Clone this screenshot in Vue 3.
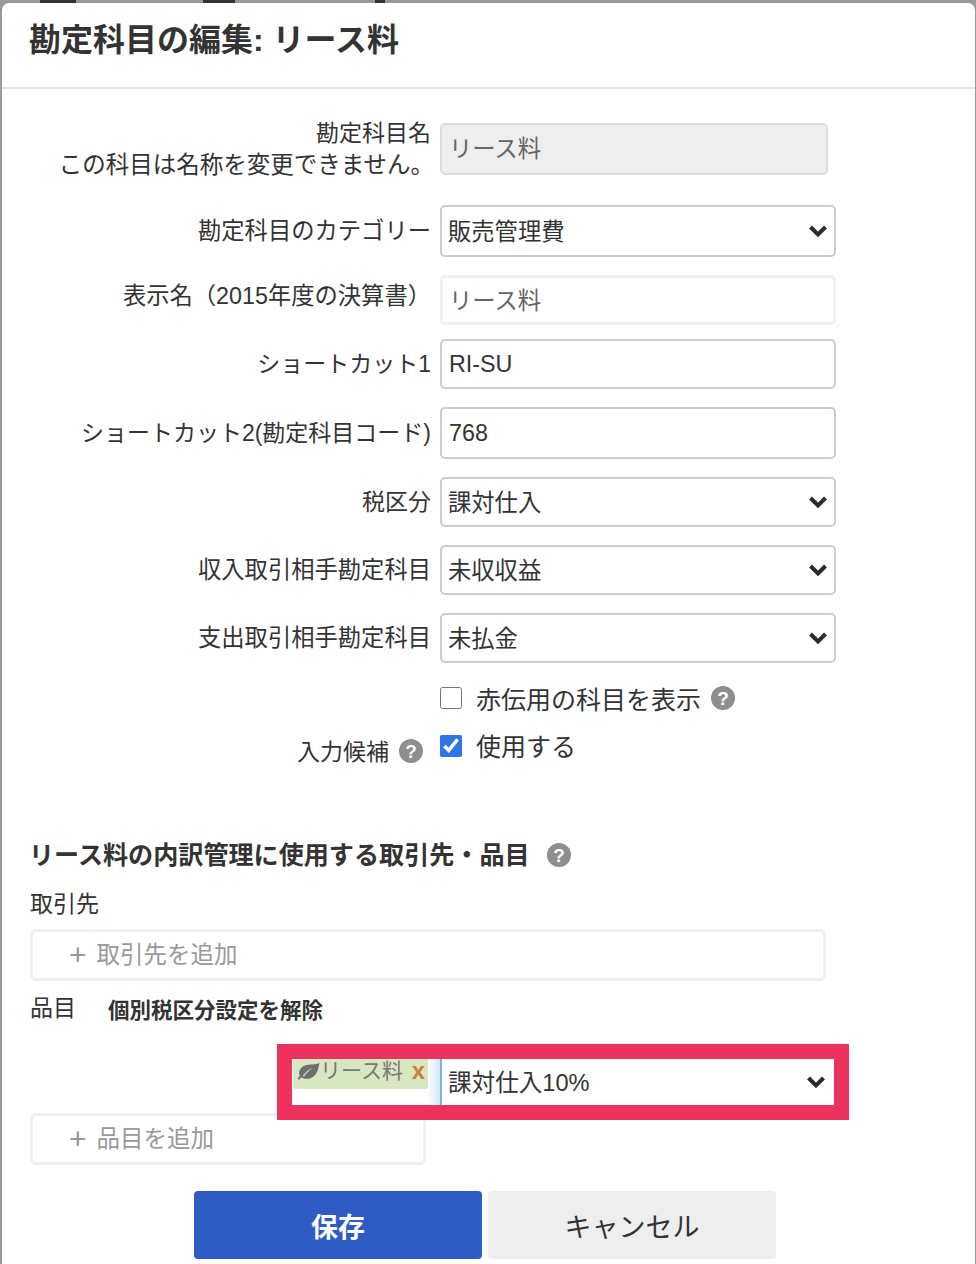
<template>
  <div class="backdrop">
    <i v-for="m in behind" :key="m.left" class="behind" :style="{ left: m.left + 'px', width: m.width + 'px' }" />
    <div class="modal">
      <header class="modal-header">
        <h1>勘定科目の編集: リース料</h1>
      </header>

      <div class="modal-body">
        <div class="form-row row-name">
          <label class="label">勘定科目名<br /><span class="note">この科目は名称を変更できません。</span></label>
          <input class="control control--disabled" value="リース料" disabled />
        </div>

        <div v-for="row in rows" :key="row.label" class="form-row" :class="row.cls">
          <label class="label" :class="{ 'label--wide': row.wide }">{{ row.label }}</label>
          <div v-if="row.options" class="select-wrap">
            <select class="control control--select">
              <option>{{ row.value }}</option>
            </select>
            <svg class="chevron" viewBox="0 0 20 14"><path d="M2.5 3 10 10.5 17.5 3" /></svg>
          </div>
          <input v-else class="control" :class="{ 'control--soft': row.soft }" :value="row.value" />
        </div>

        <div class="check-row check-row--first">
          <input type="checkbox" class="check" />
          <span class="check-text">赤伝用の科目を表示</span>
          <svg class="help" viewBox="0 0 24 24"><circle cx="12" cy="12" r="12" /><text x="12" y="18.5" text-anchor="middle">?</text></svg>
        </div>

        <div class="check-row check-row--second">
          <div class="check-label">
            <span>入力候補</span>
            <svg class="help" viewBox="0 0 24 24"><circle cx="12" cy="12" r="12" /><text x="12" y="18.5" text-anchor="middle">?</text></svg>
          </div>
          <input type="checkbox" class="check" checked />
          <span class="check-text check-text--up">使用する</span>
        </div>

        <h2 class="section-title">
          リース料の内訳管理に使用する取引先・品目
          <svg class="help" viewBox="0 0 24 24"><circle cx="12" cy="12" r="12" /><text x="12" y="18.5" text-anchor="middle">?</text></svg>
        </h2>

        <p class="field-name">取引先</p>
        <div class="add-box add-box--wide"><span class="plus">+</span>取引先を追加</div>

        <div class="item-head">
          <span>品目</span>
          <strong>個別税区分設定を解除</strong>
        </div>

        <div class="tax-row">
          <div class="tag-cell">
            <span class="tag">
              <svg class="leaf" viewBox="0 0 24 18"><path d="M23.5 0C18 3 10 0 5 4.5 1.500 8 1.500 11 2.800 13.500L.5 16.500 2 18l2.500-3c3.500 2.500 9 2.500 13-1C22 10.500 22.500 5 23.500 0ZM6 13.500C9 9.500 12 7 17 5 12.500 8 9.500 10.500 7.200 14.500Z" fill-rule="evenodd" /></svg>リース料<b class="tag-x">x</b>
            </span>
          </div>
          <div class="select-wrap select-wrap--tax">
            <select class="control control--select control--tax">
              <option>課対仕入10%</option>
            </select>
            <svg class="chevron" viewBox="0 0 20 14"><path d="M2.5 3 10 10.5 17.5 3" /></svg>
          </div>
        </div>

        <div class="add-box add-box--narrow"><span class="plus">+</span>品目を追加</div>

        <div class="actions">
          <button class="btn btn--primary">保存</button>
          <button class="btn btn--cancel">キャンセル</button>
        </div>
      </div>
    </div>
  </div>
</template>

<script setup>
const rows = [
  { label: '勘定科目のカテゴリー', value: '販売管理費', options: true, wide: true, cls: 'row-category' },
  { label: '表示名（2015年度の決算書）', value: 'リース料', soft: true, wide: true, cls: 'row-display' },
  { label: 'ショートカット1', value: 'RI-SU', cls: 'row-short' },
  { label: 'ショートカット2(勘定科目コード)', value: '768', cls: 'row-code' },
  { label: '税区分', value: '課対仕入', options: true, cls: 'row-short' },
  { label: '収入取引相手勘定科目', value: '未収収益', options: true, wide: true, cls: 'row-short' },
  { label: '支出取引相手勘定科目', value: '未払金', options: true, wide: true, cls: 'row-short' },
]

// bits of the page behind the dimmed overlay, visible above the modal
const behind = [
  { left: 40, width: 36 },
  { left: 203, width: 32 },
  { left: 375, width: 10 },
]
</script>

<style>
html,
body {
  margin: 0;
  background: #8f8f8f;
}
</style>

<style scoped>
.backdrop {
  position: relative;
  width: 976px;
  height: 1264px;
  overflow: hidden;
  background: #999;
  padding: 3px 1px 0 2px;
  box-sizing: border-box;
  font-family: "Liberation Sans", "Noto Sans CJK JP", sans-serif;
  color: #333;
}
.behind {
  position: absolute;
  top: 0;
  height: 3px;
  background: #333;
}

.modal {
  height: 1270px;
  background: #fff;
  border-radius: 7px 7px 0 0;
}

.modal-header {
  height: 86px;
  box-sizing: border-box;
  border-bottom: 2px solid #e5e5e5;
  padding: 16px 0 0 27px;
}
.modal-header h1 {
  margin: 0;
  font-size: 32px;
  line-height: 42px;
  font-weight: 700;
}

.modal-body {
  padding-top: 34px;
}

.form-row {
  display: flex;
  align-items: center;
  gap: 9px;
  margin-bottom: 18px;
}
.label {
  width: 429px;
  flex: none;
  text-align: right;
  font-size: 23px;
  line-height: 32px;
}
.label--wide {
  font-size: 23.3px;
}
.note {
  display: inline-block;
  margin-right: -3px;
  font-size: 23.5px;
}

.row-name {
  height: 52px;
  margin-bottom: 30px;
}
.row-name .control {
  width: 388px;
  height: 52px;
  padding-bottom: 4px;
}
.row-category {
  height: 52px;
}
.row-display {
  height: 50px;
  margin-bottom: 14px;
}
.row-display .label {
  position: relative;
  top: -4px;
}
.row-short {
  height: 50px;
}
.row-code {
  height: 52px;
}

.control {
  display: block;
  width: 396px;
  height: 100%;
  box-sizing: border-box;
  border: 2px solid #ccc;
  border-radius: 5px;
  background: #fff;
  padding: 0 7px;
  font-family: inherit;
  font-size: 23.3px;
  color: #333;
  outline: none;
}
.control--disabled {
  background: #eee;
  border-color: #ddd;
  color: #666;
  -webkit-text-fill-color: #666;
}
.control--soft {
  border: 3px solid #f0f0f0;
  padding: 0 6px 2px;
  color: #666;
}
.control--select {
  appearance: none;
  padding: 2px 34px 0 6px;
}

.select-wrap {
  position: relative;
  width: 396px;
  height: 100%;
}
.chevron {
  position: absolute;
  right: 8px;
  top: 50%;
  width: 20px;
  height: 14px;
  margin-top: -7px;
  pointer-events: none;
}
.chevron path {
  fill: none;
  stroke: #2b2b2b;
  stroke-width: 4;
}

.check-row {
  display: flex;
  align-items: center;
  height: 34px;
}
.check-row--first {
  margin-top: 2px;
  padding-left: 438px;
}
.check-row--second {
  margin-top: 14px;
}
.check {
  width: 22px;
  height: 22px;
  margin: 0;
  accent-color: #2f74e8;
  flex: none;
}
.check-text {
  margin-left: 14px;
  font-size: 25px;
}
.check-text--up {
  position: relative;
  top: -1px;
}
.check-label {
  width: 438px;
  box-sizing: border-box;
  padding: 8px 17px 0 0;
  display: flex;
  justify-content: flex-end;
  align-items: center;
  gap: 10px;
  font-size: 23px;
}

.help {
  width: 24px;
  height: 24px;
  flex: none;
}
.help circle {
  fill: #8e8e8e;
}
.help text {
  fill: #fff;
  font-size: 19px;
  font-weight: 700;
  font-family: "Liberation Sans", sans-serif;
}
.check-text + .help {
  margin-left: 10px;
}
.check-label .help {
  margin-top: 2px;
}

.section-title {
  display: flex;
  align-items: center;
  gap: 17px;
  margin: 72px 0 0 27px;
  height: 36px;
  font-size: 25.1px;
  font-weight: 700;
}
.section-title .help {
  margin-top: 3px;
}

.field-name {
  margin: 16px 0 0 28px;
  font-size: 23px;
  line-height: 34px;
}

.add-box {
  box-sizing: border-box;
  height: 52px;
  margin-left: 28px;
  border: 3px solid #f0f0f0;
  border-radius: 6px;
  padding-left: 36px;
  font-size: 23.5px;
  line-height: 46px;
  color: #999;
}
.plus {
  margin-right: 10px;
  font-size: 30px;
  line-height: 1;
  vertical-align: -2px;
}
.add-box--wide {
  width: 796px;
  margin-top: 8px;
}
.add-box--narrow {
  width: 396px;
  margin-top: 8px;
}

.item-head {
  display: flex;
  align-items: center;
  gap: 32px;
  margin: 8px 0 0 28px;
  height: 34px;
  font-size: 23px;
}
.item-head strong {
  font-size: 21.5px;
  position: relative;
  top: 2px;
}

/* red annotation frame goes over the neighbours */
.tax-row {
  position: relative;
  z-index: 1;
  display: flex;
  width: 542px;
  height: 46px;
  margin: 36px 0 0 290px;
  background: #fff;
}
.tax-row::after {
  content: "";
  position: absolute;
  inset: -15px;
  border: 15px solid #ec335d;
  pointer-events: none;
}
.tag-cell {
  width: 148px;
  flex: none;
  box-sizing: border-box;
  background: linear-gradient(to right, #fff 135px, #d5e5f7);
  padding-left: 1px;
}
.tag {
  display: flex;
  align-items: center;
  width: 135px;
  height: 30px;
  box-sizing: border-box;
  padding: 0 3px 6px 4px;
  background: #d7e8c1;
  border-radius: 0 0 3px 3px;
  font-size: 21px;
  line-height: 24px;
  color: #777;
  white-space: nowrap;
}
.leaf {
  width: 23px;
  height: 17px;
  flex: none;
  fill: #6f6f6f;
}
.tag-x {
  margin-left: auto;
  font-size: 24px;
  color: #cc8138;
}
.select-wrap--tax {
  width: 394px;
}
.control--tax {
  width: 394px;
  border: 0;
  border-left: 2px solid #7fb2ea;
  border-radius: 0;
  padding-left: 6px;
  font-size: 23.6px;
}

.actions {
  display: flex;
  gap: 6px;
  margin: 26px 0 0 192px;
}
.btn {
  width: 288px;
  height: 68px;
  border: 0;
  border-radius: 4px;
  font-family: inherit;
  font-size: 27px;
}
.btn--primary {
  background: #2f5bc4;
  color: #fff;
  font-weight: 700;
}
.btn--cancel {
  background: #eee;
  color: #333;
}
</style>
